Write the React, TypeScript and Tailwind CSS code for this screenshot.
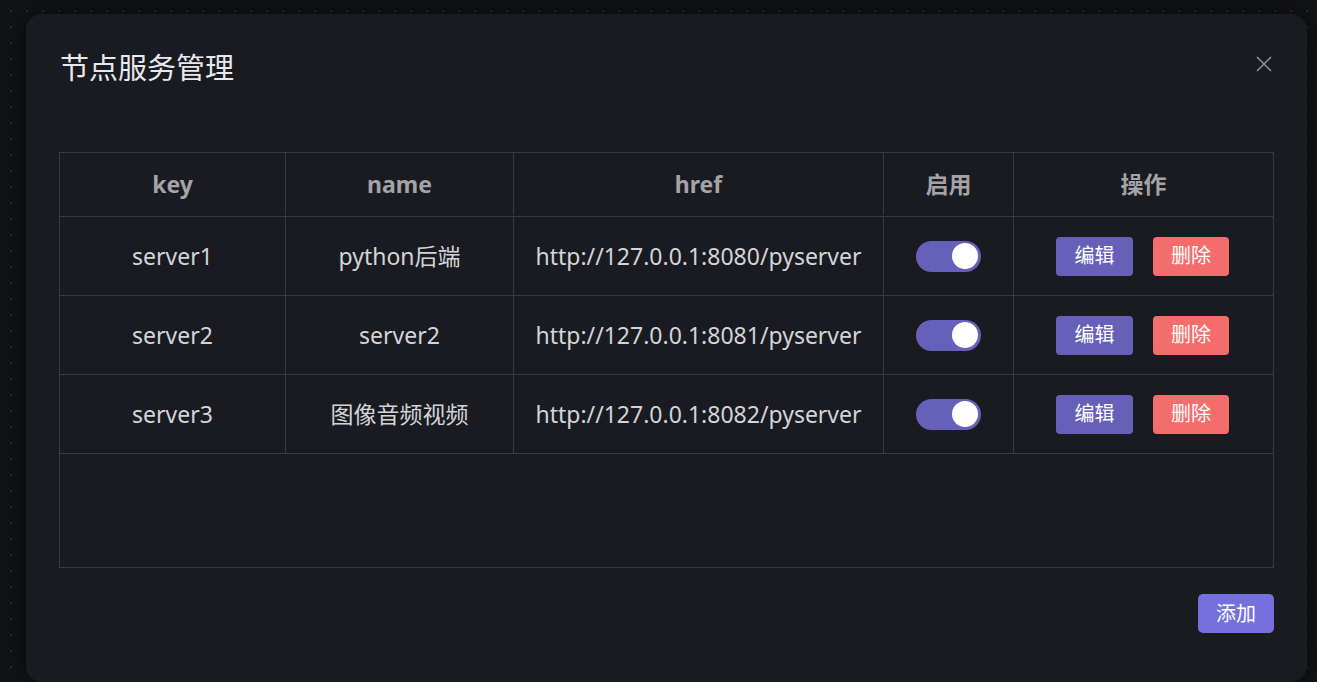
import React from "react";

const rows = [
  { key: "server1", name: "python后端", href: "http://127.0.0.1:8080/pyserver" },
  { key: "server2", name: "server2", href: "http://127.0.0.1:8081/pyserver" },
  { key: "server3", name: "图像音频视频", href: "http://127.0.0.1:8082/pyserver" },
];

function Toggle() {
  return (
    <div className="w-[65px] h-[31px] rounded-full bg-[#6560b9] flex items-center justify-end pr-[3px]">
      <div className="w-[26px] h-[26px] rounded-full bg-white" />
    </div>
  );
}

export default function App() {
  return (
    <div
      className="w-[1317px] h-[682px] overflow-hidden bg-[#121316] bg-[radial-gradient(circle,#2a2b31_1px,transparent_1.2px)] bg-[length:16px_16px] bg-[position:3px_3px] pl-[26px] pt-[14px]"
      style={{ fontFamily: '"Noto Sans", "Noto Sans CJK SC", sans-serif' }}
    >
      <div className="w-[1281px] h-[668px] rounded-[16px] bg-[#1a1b20] shadow-[0_0_30px_rgba(0,0,0,0.6)] flex flex-col px-[33px]">
        <div className="flex items-start justify-between h-[138px] pt-[32px]">
          <div className="text-[29px] leading-[44px] text-[#e8e9ee] pl-[1px]">节点服务管理</div>
          <svg width="18" height="18" viewBox="0 0 18 18" className="mr-[1px] mt-[9px]">
            <path d="M2 2 L16 16 M16 2 L2 16" stroke="#8e8e95" strokeWidth="1.6" />
          </svg>
        </div>
        <div className="w-[1215px] h-[416px] border border-[#3a3b40] flex flex-col">
          <div className="grid grid-cols-[226px_228px_370px_130px_1fr] h-[64px] pb-[1px] border-b border-[#3a3b40] text-[23px] font-bold text-[#a3a3a8]">
            <div className="flex items-center justify-center border-r border-[#3a3b40]">key</div>
            <div className="flex items-center justify-center border-r border-[#3a3b40]">name</div>
            <div className="flex items-center justify-center border-r border-[#3a3b40]">href</div>
            <div className="flex items-center justify-center border-r border-[#3a3b40]">启用</div>
            <div className="flex items-center justify-center">操作</div>
          </div>
          {rows.map((r) => (
            <div
              key={r.key}
              className="grid grid-cols-[226px_228px_370px_130px_1fr] h-[79px] border-b border-[#3a3b40] text-[23px] text-[#d3d4d9]"
            >
              <div className="flex items-center justify-center border-r border-[#3a3b40]">{r.key}</div>
              <div className="flex items-center justify-center border-r border-[#3a3b40]">{r.name}</div>
              <div className="flex items-center justify-center border-r border-[#3a3b40]">{r.href}</div>
              <div className="flex items-center justify-center border-r border-[#3a3b40]">
                <Toggle />
              </div>
              <div className="flex items-center justify-center gap-[20px] pr-[2px]">
                <button className="w-[77px] h-[39px] rounded-[4px] bg-[#6660b8] text-white text-[20px]">编辑</button>
                <button className="w-[76px] h-[39px] rounded-[4px] bg-[#f56c6c] text-white text-[20px]">删除</button>
              </div>
            </div>
          ))}
          <div className="flex-1" />
        </div>
        <div className="flex justify-end mt-[26px] pr-[0px]">
          <button className="w-[76px] h-[39px] rounded-[5px] bg-[#7670de] text-white text-[20px]">添加</button>
        </div>
      </div>
    </div>
  );
}
